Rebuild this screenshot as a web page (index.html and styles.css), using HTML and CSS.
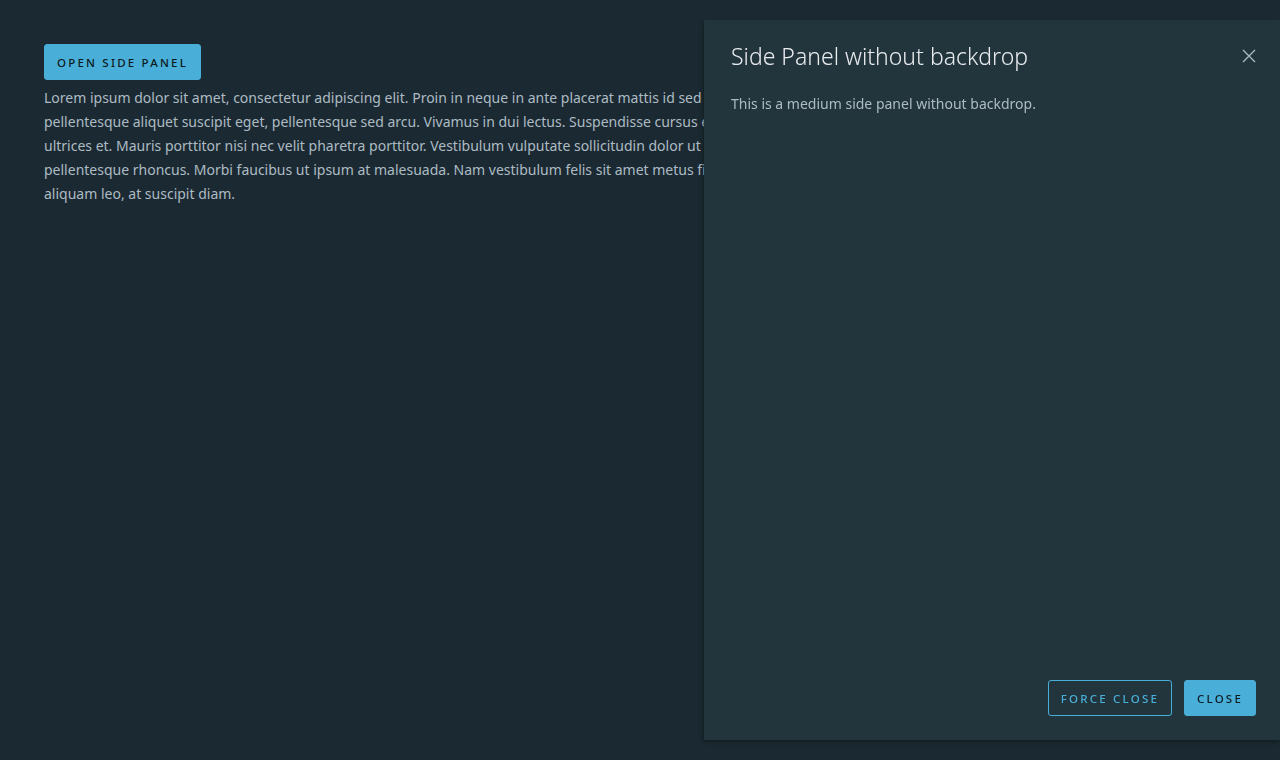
FILE: index.html
```html
<!DOCTYPE html>
<html lang="en">
<head>
<meta charset="utf-8">
<title>Side Panel</title>
<link rel="stylesheet" href="styles.css">
</head>
<body>
<main class="content">
  <button class="btn btn-primary">Open side panel</button>
  <p class="lorem">Lorem ipsum dolor sit amet, consectetur adipiscing elit. Proin in neque in ante placerat mattis id sed quam. Proin rhoncus lacus et tempor dignissim. Vivamus sem quam,<br>pellentesque aliquet suscipit eget, pellentesque sed arcu. Vivamus in dui lectus. Suspendisse cursus est ac nisl imperdiet viverra. Aenean sagittis nibh lacus, in eleifend urna<br>ultrices et. Mauris porttitor nisi nec velit pharetra porttitor. Vestibulum vulputate sollicitudin dolor ut tincidunt. Phasellus vitae blandit felis. Nullam posuere ipsum tincidunt velit<br>pellentesque rhoncus. Morbi faucibus ut ipsum at malesuada. Nam vestibulum felis sit amet metus finibus hendrerit. Fusce faucibus odio eget ex vulputate rhoncus. Fusce nec<br>aliquam leo, at suscipit diam.</p>
</main>
<aside class="side-panel">
  <header class="panel-header">
    <h3 class="panel-title">Side Panel without backdrop</h3>
    <button class="close" aria-label="Close">
      <svg width="14" height="14" viewBox="0 0 14 14"><path d="M1 1L13 13M13 1L1 13" stroke="currentColor" stroke-width="1.3" fill="none"/></svg>
    </button>
  </header>
  <div class="panel-body">
    <p>This is a medium side panel without backdrop.</p>
  </div>
  <footer class="panel-footer">
    <button class="btn btn-outline">Force close</button>
    <button class="btn btn-primary">Close</button>
  </footer>
</aside>
</body>
</html>
```
FILE: styles.css
```css
html, body {
  margin: 0;
  height: 100%;
}
body {
  background: #1b2a32;
  font-family: "Noto Sans", "Liberation Sans", sans-serif;
  color: #adbbc4;
  overflow: hidden;
}
.content {
  padding: 44px 44px;
  display: flex;
  flex-direction: column;
  align-items: flex-start;
}
.btn {
  height: 36px;
  padding: 0 12px;
  border-radius: 3px;
  font-family: "Noto Sans", "Liberation Sans", sans-serif;
  font-size: 11.5px;
  font-weight: 500;
  letter-spacing: 2.2px;
  text-transform: uppercase;
  cursor: pointer;
}
.btn-primary {
  background: #49afd9;
  border: 1px solid #49afd9;
  color: #0d1a20;
}
.btn-outline {
  background: transparent;
  border: 1px solid #49afd9;
  color: #49afd9;
}
.lorem {
  margin: 6px 0 0;
  font-size: 14px;
  line-height: 24px;
  white-space: nowrap;
}
.side-panel {
  position: fixed;
  top: 20px;
  right: 0;
  bottom: 20px;
  width: 576px;
  background: #22343c;
  box-shadow: -1px 2px 4px rgba(0,0,0,0.35);
  display: flex;
  flex-direction: column;
  box-sizing: border-box;
  padding: 20px 24px 24px 27px;
}
.panel-header {
  display: flex;
  justify-content: space-between;
  align-items: center;
}
.panel-title {
  margin: 0;
  font-size: 23px;
  font-weight: 300;
  line-height: 32px;
  color: #e9ecef;
}
.close {
  background: none;
  border: none;
  padding: 0;
  color: #adbbc4;
  display: flex;
}
.panel-body {
  flex: 1;
  padding-top: 20px;
}
.panel-body p {
  margin: 0;
  font-size: 14px;
  line-height: 24px;
}
.panel-footer {
  display: flex;
  justify-content: flex-end;
  gap: 12px;
}
```
